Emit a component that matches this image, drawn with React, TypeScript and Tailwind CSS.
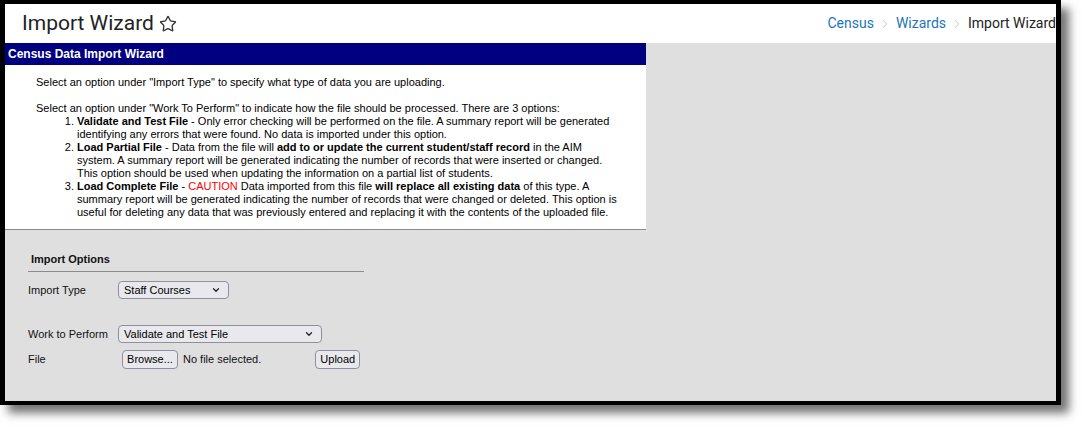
import React from "react";
import { Star, ChevronRight, ChevronDown } from "lucide-react";

const Select: React.FC<{ value: string; width: string }> = ({ value, width }) => (
  <div
    className={`flex h-[18px] ${width} items-center justify-between rounded-[4px] border border-[#8f8f9d] bg-[#e9e9ed] pl-[5px] pr-[7px] text-[11px] text-black`}
  >
    <span>{value}</span>
    <ChevronDown className="h-[10px] w-[10px] text-[#222]" strokeWidth={3} />
  </div>
);

const Button: React.FC<{ label: string; className?: string }> = ({ label, className = "" }) => (
  <div
    className={`flex h-[19px] items-center justify-center rounded-[4px] border border-[#8f8f9d] bg-[#e9e9ed] text-[11px] text-black ${className}`}
  >
    {label}
  </div>
);

export default function App() {
  return (
    <div className="h-[431px] w-[1085px] bg-white">
      {/* screenshot frame */}
      <div className="flex h-[405px] w-[1061px] flex-col overflow-hidden border-x-[5px] border-y-[4px] border-black bg-[#dfdfdf] shadow-[8px_8px_9px_rgba(0,0,0,0.55)]">
        {/* Page header */}
        <div className="flex h-[39px] shrink-0 items-center overflow-hidden bg-white pl-[17px] font-['Roboto',sans-serif]">
          <h1 className="text-[21px] leading-none text-[#222]">Import Wizard</h1>
          <Star className="ml-[5px] h-[18px] w-[18px] text-[#333]" strokeWidth={1.8} />
          <nav className="ml-auto flex shrink-0 items-center whitespace-nowrap text-[14px]">
            <span className="text-[#1c75bc]">Census</span>
            <ChevronRight className="mx-[4px] h-[14px] w-[14px] text-[#bbb]" strokeWidth={1.5} />
            <span className="text-[#1c75bc]">Wizards</span>
            <ChevronRight className="mx-[4px] h-[14px] w-[14px] text-[#bbb]" strokeWidth={1.5} />
            <span className="text-[#222]">Import Wizard</span>
          </nav>
        </div>

        {/* Instructions panel */}
        <div className="flex shrink-0 font-['Liberation_Sans',Arial,sans-serif]">
          <div className="w-[641px] border-b border-[#8c8c8c] bg-white">
            <div className="flex h-[22px] items-center bg-[#000080] pl-[3px] text-[12px] font-bold text-white">
              Census Data Import Wizard
            </div>
            <div className="pb-[10px] pl-[31px] pr-[26px] pt-[11px] text-[11px] leading-[13px] text-black">
              <p className="mb-[13px]">
                Select an option under "Import Type" to specify what type of data you are uploading.
              </p>
              <p>
                Select an option under "Work To Perform" to indicate how the file should be processed. There are 3
                options:
              </p>
              <ol className="list-decimal pl-[41px]">
                <li>
                  <b>Validate and Test File</b> - Only error checking will be performed on the file. A summary report
                  will be generated identifying any errors that were found. No data is imported under this option.
                </li>
                <li>
                  <b>Load Partial File</b> - Data from the file will <b>add to or update the current student/staff record</b>{" "}
                  in the AIM system. A summary report will be generated indicating the number of records that were
                  inserted or changed. This option should be used when updating the information on a partial list of
                  students.
                </li>
                <li>
                  <b>Load Complete File</b> - <span className="text-[#ff0000]">CAUTION</span> Data imported from this
                  file <b>will replace all existing data</b> of this type. A summary report will be generated indicating
                  the number of records that were changed or deleted. This option is useful for deleting any data that
                  was previously entered and replacing it with the contents of the uploaded file.
                </li>
              </ol>
            </div>
          </div>
          <div className="flex-1" />
        </div>

        {/* Import options form */}
        <div className="pl-[23px] pt-[23px] font-['Liberation_Sans',Arial,sans-serif] text-[11px] leading-[13px] text-[#111]">
          <div className="w-[336px] border-b border-[#8c8c8c] pb-[5px] pl-[3px] font-bold">Import Options</div>

          <div className="mt-[9px] flex items-center">
            <span className="w-[90px]">Import Type</span>
            <Select value="Staff Courses" width="w-[111px]" />
          </div>

          <div className="mt-[26px] flex items-center">
            <span className="w-[90px]">Work to Perform</span>
            <Select value="Validate and Test File" width="w-[204px]" />
          </div>

          <div className="mt-[7px] flex items-center">
            <span className="w-[90px]">File</span>
            <Button label="Browse..." className="ml-[4px] w-[56px]" />
            <span className="ml-[5px]">No file selected.</span>
            <Button label="Upload" className="ml-[54px] h-[18px] w-[45px]" />
          </div>
        </div>
      </div>
    </div>
  );
}
